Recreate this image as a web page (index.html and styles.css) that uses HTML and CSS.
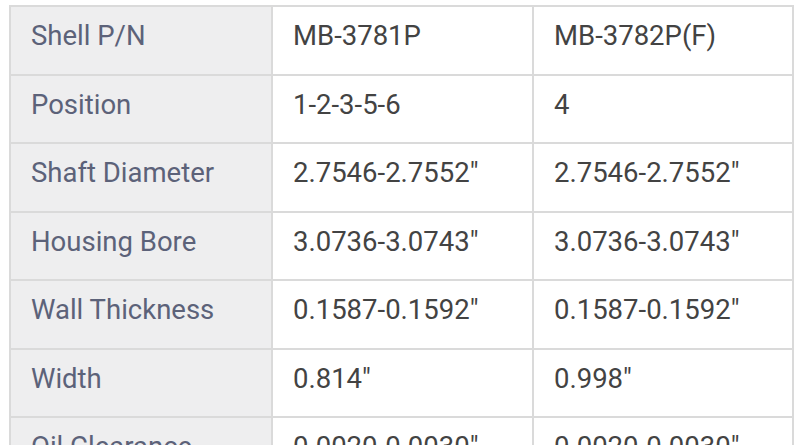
FILE: index.html
```html
<!DOCTYPE html>
<html>
<head>
<meta charset="utf-8">
<link rel="stylesheet" href="styles.css">
</head>
<body>
<table class="spec">
  <colgroup><col class="c1"><col class="c2"><col class="c3"></colgroup>
  <tbody>
    <tr><th>Shell P/N</th><td>MB-3781P</td><td>MB-3782P(F)</td></tr>
    <tr><th>Position</th><td>1-2-3-5-6</td><td>4</td></tr>
    <tr><th>Shaft Diameter</th><td>2.7546-2.7552"</td><td>2.7546-2.7552"</td></tr>
    <tr><th>Housing Bore</th><td>3.0736-3.0743"</td><td>3.0736-3.0743"</td></tr>
    <tr><th>Wall Thickness</th><td>0.1587-0.1592"</td><td>0.1587-0.1592"</td></tr>
    <tr><th>Width</th><td>0.814"</td><td>0.998"</td></tr>
    <tr><th>Oil Clearance</th><td>0.0020-0.0030"</td><td>0.0020-0.0030"</td></tr>
  </tbody>
</table>
</body>
</html>
```
FILE: styles.css
```css
html, body {
  margin: 0;
  padding: 0;
  background: #ffffff;
  overflow: hidden;
}
.spec {
  margin: 5px 0 0 9px;
  width: 783px;
  border-collapse: collapse;
  table-layout: fixed;
  font-family: Roboto, "Liberation Sans", sans-serif;
  font-size: 27.5px;
}
.c1 { width: 262px; }
.c2 { width: 261px; }
.c3 { width: 260px; }
.spec th, .spec td {
  border: 2px solid #dadada;
  height: 68.5px;
  box-sizing: border-box;
  padding: 0 0 8px 20px;
  text-align: left;
  vertical-align: middle;
  font-weight: 400;
  white-space: nowrap;
  line-height: 32px;
}
.spec th {
  background: #eeeeef;
  color: #5c6279;
}
.spec td {
  background: #ffffff;
  color: #434343;
}
```
